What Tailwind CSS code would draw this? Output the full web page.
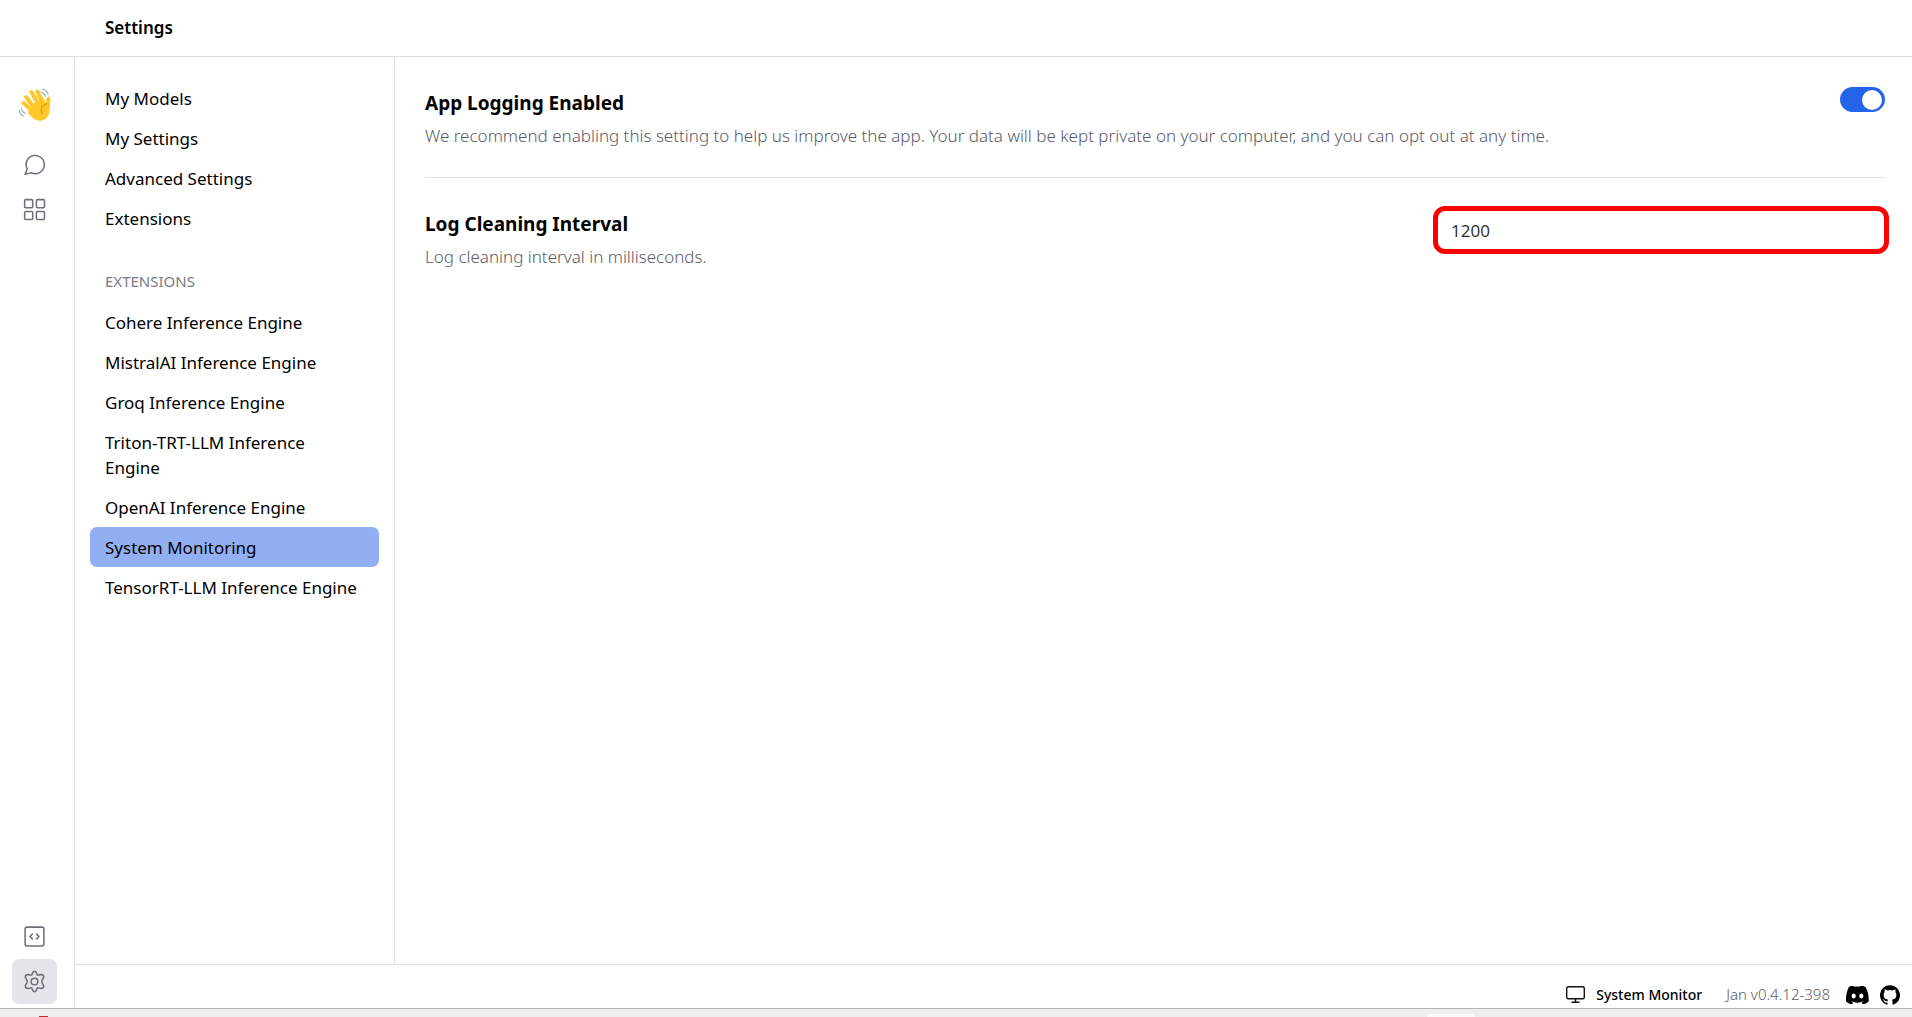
<!DOCTYPE html>
<html lang="en">
<head>
<meta charset="utf-8">
<title>Settings</title>
<script src="https://cdn.jsdelivr.net/npm/@tailwindcss/browser@4"></script>
</head>
<body class="flex h-screen flex-col overflow-hidden bg-white font-['Noto_Sans',sans-serif] text-[17px] leading-[25px] text-black">
<header class="flex h-[57px] shrink-0 items-center border-b border-[#e0e0e2] pb-px pl-[105px]">
  <h1 class="font-semibold">Settings</h1>
</header>
<div class="flex min-h-0 flex-1">
  <nav aria-label="Main" class="flex w-[75px] shrink-0 flex-col items-start justify-between border-r border-[#e0e0e2] pt-[29px] pb-1 pl-3">
    <div class="flex flex-col">
      <a href="#" aria-label="Home" class="mb-[19px] flex h-[37px] w-[45px] items-center justify-center">
        <svg class="h-[34px] w-9" viewBox="0 0 36 34" fill="none">
          <path d="M6.500 14.800 14 22M9 9l8 10M14.300 4l7.500 12M20.300 3.500 26 14" stroke="#ffc828" stroke-width="3.900" stroke-linecap="round"/>
          <path d="M12 20 16 16 20 13.500 24.500 11.500 28.200 15.500 29.600 10.200C30.300 7.600 33.500 8.300 33.400 11L32.600 22C32.200 28.500 28.500 32.500 23.500 32.700 18 32.800 14.500 29.500 11 24.500Z" fill="#ffc828"/>
          <path d="M29.800 15.800c-5.400 1.200-6.800 5-4.700 10" stroke="#e8a00c" stroke-width="1.300" stroke-linecap="round"/>
          <path d="m10.500 13.500 4.300 4.900M15.500 9.500l4 5.300M20.500 8.500l3 4.500" stroke="#eda713" stroke-width=".6" stroke-linecap="round"/>
          <path d="M23.800 3.800c2.200.7 3.800 2.200 4.500 4.500M25.600 1.200c3 .8 5 2.800 5.500 5.500M4.400 20.800c.5 2.300 1.800 3.900 3.900 4.700M2.200 22.300c.5 2.800 2.200 4.900 4.700 5.900" stroke="#a3b4bd" stroke-width="1.200" stroke-linecap="round"/>
        </svg>
      </a>
      <a href="#" aria-label="Chat" class="flex size-[45px] items-center justify-center">
        <svg class="size-[23px]" viewBox="0 0 24 24" fill="none" stroke="#6f6f7b" stroke-width="1.600" stroke-linecap="round" stroke-linejoin="round"><path d="M4.400 16.600A9.500 9.500 0 1 1 8.600 20.600L2.200 22.300Z"/></svg>
      </a>
      <a href="#" aria-label="Hub" class="flex size-[45px] items-center justify-center">
        <svg class="size-[23px]" viewBox="0 0 24 24" fill="none" stroke="#6f6f7b" stroke-width="1.600"><rect x="1.700" y="1.700" width="8.400" height="8.400" rx="1"/><rect x="14" y="1.700" width="8.400" height="8.400" rx="1"/><rect x="1.700" y="14" width="8.400" height="8.400" rx="1"/><rect x="14" y="14" width="8.400" height="8.400" rx="1"/></svg>
      </a>
    </div>
    <div class="flex flex-col">
      <a href="#" aria-label="Local API Server" class="flex size-[45px] items-center justify-center">
        <svg class="size-[23px]" viewBox="0 0 24 24" fill="none" stroke="#6f6f7b" stroke-width="1.600" stroke-linecap="round" stroke-linejoin="round"><rect x="2.200" y="2.200" width="19.600" height="19.600" rx="2"/><path d="M9.700 9.500 7.300 12l2.400 2.500M14.300 9.500l2.400 2.500-2.400 2.500"/></svg>
      </a>
      <a href="#" aria-label="Settings" class="flex size-[45px] items-center justify-center rounded-[7px] bg-[#e4e5ea]">
        <svg class="size-[23px]" viewBox="0 0 24 24" fill="none" stroke="#6f6f7b" stroke-width="1.600" stroke-linejoin="round"><circle cx="12" cy="12" r="3.500"/><path d="M10.300 2.300Q12 .5 13.700 2.300L14.600 4.700Q15.200 5.600 16.300 5.300L19.400 4.700Q21.800 5.300 21.600 7.700L19.900 10.600Q19.300 12 19.900 13.400L21.600 16.300Q21.800 18.700 19.400 19.300L16.300 18.700Q15.200 18.400 14.600 19.300L13.700 21.700Q12 23.500 10.300 21.700L9.400 19.300Q8.800 18.400 7.700 18.700L4.600 19.300Q2.200 18.700 2.400 16.300L4.100 13.400Q4.700 12 4.100 10.600L2.400 7.700Q2.200 5.300 4.600 4.700L7.700 5.300Q8.800 5.600 9.400 4.700Z"/></svg>
      </a>
    </div>
  </nav>
  <div class="flex min-w-0 flex-1 flex-col">
    <div class="flex min-h-0 flex-1">
      <aside class="w-80 shrink-0 border-r border-[#e0e0e2] px-[15px] pt-[21px]">
        <nav aria-label="Settings sections" class="flex flex-col">
          <a href="#" class="rounded-[7px] px-[15px] pt-2 pb-[7px]">My Models</a>
          <a href="#" class="rounded-[7px] px-[15px] pt-2 pb-[7px]">My Settings</a>
          <a href="#" class="rounded-[7px] px-[15px] pt-2 pb-[7px]">Advanced Settings</a>
          <a href="#" class="rounded-[7px] px-[15px] pt-2 pb-[7px]">Extensions</a>
          <h2 class="mt-[31px] mb-2 px-[15px] text-[15px] text-[#7b7b85]">EXTENSIONS</h2>
          <a href="#" class="rounded-[7px] px-[15px] pt-2 pb-[7px]">Cohere Inference Engine</a>
          <a href="#" class="rounded-[7px] px-[15px] pt-2 pb-[7px]">MistralAI Inference Engine</a>
          <a href="#" class="rounded-[7px] px-[15px] pt-2 pb-[7px]">Groq Inference Engine</a>
          <a href="#" class="rounded-[7px] px-[15px] pt-2 pb-[7px]">Triton-TRT-LLM Inference<br>Engine</a>
          <a href="#" class="rounded-[7px] px-[15px] pt-2 pb-[7px]">OpenAI Inference Engine</a>
          <a href="#" aria-current="page" class="rounded-[7px] bg-[#92aff3] px-[15px] pt-2 pb-[7px]">System Monitoring</a>
          <a href="#" class="rounded-[7px] px-[15px] pt-2 pb-[7px]">TensorRT-LLM Inference Engine</a>
        </nav>
      </aside>
      <main class="min-w-0 flex-1 pr-[27px] pl-[30px]">
        <section class="flex items-start justify-between border-b border-[#e0e0e2] pt-[30px] pb-[29px]">
          <div>
            <h3 class="pt-1 text-[19px] font-bold"><label for="logging">App Logging Enabled</label></h3>
            <p class="mt-[7px] font-light text-[#5c5c66]">We recommend enabling this setting to help us improve the app. Your data will be kept private on your computer, and you can opt out at any time.</p>
          </div>
          <div class="relative h-[25px] w-[45px] shrink-0">
            <input id="logging" type="checkbox" role="switch" checked class="peer block h-[25px] w-[45px] appearance-none rounded-full bg-[#c8c8cc] checked:bg-[#2563eb]">
            <span class="pointer-events-none absolute top-[3px] left-[3px] size-5 rounded-full bg-white peer-checked:left-[22px]"></span>
          </div>
        </section>
        <section class="flex items-start justify-between pt-7">
          <div>
            <h3 class="pt-[6px] text-[19px] font-bold"><label for="interval">Log Cleaning Interval</label></h3>
            <p class="mt-[7px] font-light text-[#5c5c66]">Log cleaning interval in milliseconds.</p>
          </div>
          <input id="interval" type="text" value="1200" class="-mr-1 h-12 w-[456px] rounded-[12px] border-5 border-[#ff0000] px-[13px] pt-px font-['Open_Sans',sans-serif] text-[#2a2a2a]">
        </section>
      </main>
    </div>
    <footer class="flex h-11 shrink-0 items-end justify-end border-t border-[#e0e0e2] pr-3">
      <button type="button" class="flex h-[27px] items-center gap-[11px] text-[14px] font-medium">
        <svg class="h-[17px] w-[19px]" viewBox="0 0 19 17" fill="none" stroke="#111" stroke-width="1.400"><rect x=".7" y=".7" width="17.600" height="12" rx="1.500"/><path d="M9.500 12.700v3.300M5.500 16.200h8"/></svg>
        System Monitor
      </button>
      <span class="ml-6 flex h-[27px] items-center text-[15px] font-light text-[#5c5c66]">Jan v0.4.12-398</span>
      <a href="#" aria-label="Discord" class="ml-4 flex h-[27px] items-center"><svg class="h-[18px] w-[23px]" viewBox="0 3.500 24 17" preserveAspectRatio="none"><path d="M20.320 4.370a19.800 19.800 0 0 0-4.890-1.520.07.07 0 0 0-.8.040c-.21.380-.44.870-.61 1.250a18.300 18.300 0 0 0-5.490 0c-.16-.39-.4-.87-.61-1.250a.08.08 0 0 0-.08-.04 19.700 19.700 0 0 0-4.890 1.520C.53 9.050-.32 13.580.1 18.060c0 .2.010.4.030.05a19.900 19.900 0 0 0 6 3.030c.46-.63.870-1.300 1.220-1.990-.65-.25-1.270-.55-1.870-.9.120-.9.250-.19.370-.29 3.930 1.800 8.180 1.800 12.060 0 .12.100.25.200.37.290-.6.350-1.220.65-1.870.9.360.7.770 1.360 1.220 1.990a19.800 19.800 0 0 0 6.030-3.080c.5-5.180-.84-9.670-3.340-13.690zM8.020 15.330c-1.180 0-2.160-1.090-2.160-2.420s.96-2.420 2.160-2.420c1.210 0 2.180 1.100 2.160 2.420 0 1.330-.96 2.420-2.160 2.420zm7.970 0c-1.180 0-2.150-1.090-2.150-2.420s.95-2.420 2.150-2.420c1.210 0 2.180 1.100 2.160 2.420 0 1.330-.95 2.420-2.160 2.420z"/></svg></a>
      <a href="#" aria-label="GitHub" class="ml-[11px] flex h-[27px] items-center"><svg class="size-5" viewBox="0 0 24 24"><path d="M12 .3a12 12 0 0 0-3.790 23.400c.6.100.82-.26.820-.58v-2.030c-3.340.73-4.040-1.610-4.040-1.610-.55-1.390-1.340-1.760-1.340-1.760-1.080-.74.090-.73.090-.73 1.200.08 1.840 1.240 1.840 1.240 1.070 1.830 2.800 1.300 3.490 1 .1-.78.420-1.310.76-1.610-2.660-.3-5.470-1.330-5.470-5.930 0-1.310.47-2.380 1.240-3.220-.13-.3-.54-1.520.11-3.180 0 0 1.010-.32 3.300 1.230a11.500 11.500 0 0 1 6.010 0c2.290-1.550 3.300-1.230 3.300-1.230.65 1.660.24 2.880.12 3.180.77.840 1.230 1.910 1.230 3.220 0 4.610-2.800 5.620-5.480 5.920.43.370.82 1.100.82 2.220v3.290c0 .32.210.69.820.57A12 12 0 0 0 12 .3"/></svg></a>
    </footer>
  </div>
</div>
<div class="flex h-[9px] shrink-0 items-end justify-between border-t border-[#b3b3b3] bg-[#eeeeee] pr-[437px] pl-[39px]">
  <div class="h-px w-[9px] bg-[#c22b2b]"></div>
  <div class="h-[3px] w-12 rounded-t-[3px] bg-[#f9f9f9]"></div>
</div>
</body>
</html>
